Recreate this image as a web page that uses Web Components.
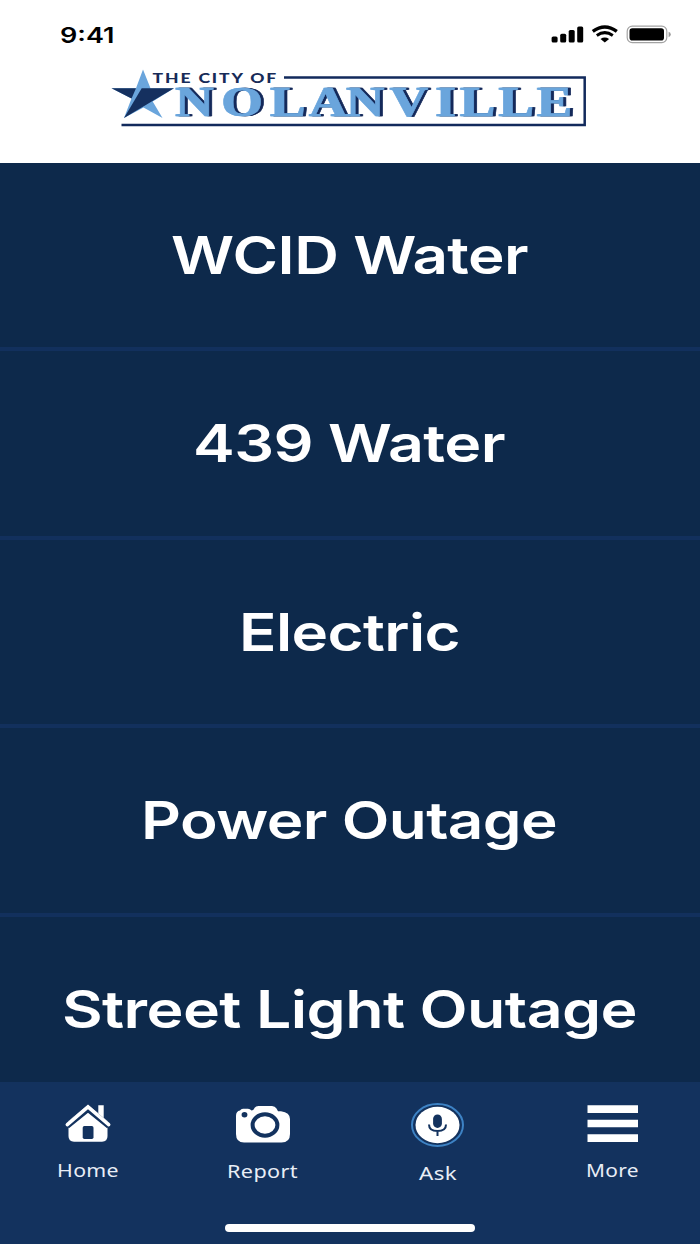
<!DOCTYPE html>
<html lang="en">
<head>
<meta charset="utf-8">
<title>City of Nolanville</title>
<style>
body{margin:0;background:#0d294b;font-family:Inter,"Liberation Sans",sans-serif}
</style>
</head>
<body>
<city-app></city-app>
<script>
class Base extends HTMLElement{
  constructor(){super();this.attachShadow({mode:'open'})}
  draw(html){this.shadowRoot.innerHTML=html}
}

/* One line of text, widened to the given width. */
customElements.define('wide-text',class extends Base{
  connectedCallback(){
    const a=n=>this.getAttribute(n),w=+a('w'),h=+a('h');
    this.draw(`<style>:host{display:block;line-height:0}svg{display:block;overflow:visible}</style>
    <svg width="${w}" height="${h}"><text x="0" y="${a('base')}" textLength="${w}" lengthAdjust="spacingAndGlyphs" fill="currentColor" font-size="${a('size')}" font-weight="${a('weight')||400}" letter-spacing="${a('gap')||0}">${a('text')}</text></svg>`);
  }
});

customElements.define('status-bar',class extends Base{
  connectedCallback(){this.draw(`<style>
    :host{display:flex;justify-content:space-between;align-items:flex-start;height:62px;box-sizing:border-box;padding:24px 29px 0 59.5px;color:#000}
    svg{display:block}</style>
    <wide-text text="9:41" w="54.5" h="20" base="18.7" size="21.5" weight="600"></wide-text>
    <svg width="120" height="22" viewBox="551 24 120 22">
      <rect x="551.6" y="36.5" width="6" height="6" rx="1.6"/><rect x="560.2" y="33.7" width="6" height="8.8" rx="1.6"/><rect x="568.7" y="30" width="6" height="12.5" rx="1.6"/><rect x="577.2" y="26.5" width="6" height="16" rx="1.6"/>
      <path d="M592.8 31.4Q604.8 22.6 616.8 31.4" fill="none" stroke="#000" stroke-width="3.4"/>
      <path d="M596.8 35.4Q604.8 29.9 612.8 35.4" fill="none" stroke="#000" stroke-width="3"/>
      <path d="M600.5 38.9Q604.8 36.3 609.1 38.9L604.8 42.4Z"/>
      <rect x="627.2" y="26.2" width="39.6" height="16.4" rx="5" fill="none" stroke="#a3a3a3" stroke-width="1.2"/>
      <rect x="629.5" y="28.3" width="34.5" height="12.2" rx="2.8"/>
      <path d="M668.6 31.8q2.2.8 2.2 2.7t-2.2 2.7z" fill="#999"/>
    </svg>`)}
});

customElements.define('city-logo',class extends Base{
  connectedCallback(){this.draw(`<style>:host{display:block;width:480px;height:62px}svg{display:block}</style>
    <svg width="480" height="62" viewBox="108 67 480 62">
      <defs><filter id="edge" x="-5%" y="-10%" width="110%" height="120%" color-interpolation-filters="sRGB">
        <feOffset in="SourceGraphic" dx="1" result="a"/>
        <feMerge result="face"><feMergeNode in="SourceGraphic"/><feMergeNode in="a"/></feMerge>
        <feOffset in="face" dx="3" result="s"/><feFlood flood-color="#14295a"/><feComposite in2="s" operator="in" result="shade"/>
        <feMerge><feMergeNode in="shade"/><feMergeNode in="face"/></feMerge></filter></defs>
      <path d="M284 77.5H584.7V125H121.5" fill="none" stroke="#122a5c" stroke-width="2.5"/>
      <path d="M143 69.5L150.5 88.2L174 88.2L152.7 101.4L162.5 118L143.5 107.6L124 118L131.5 98.5L111.5 88.2L136 88.2Z" fill="#6aa5dc"/>
      <path d="M111.5 88.2H136L131.5 98.5Z" fill="#15305f"/>
      <path d="M141.7 88.2H174L124 118Z" fill="#15305f"/>
      <text x="152.6" y="82.6" textLength="125.5" lengthAdjust="spacingAndGlyphs" font-family="Lato,sans-serif" font-size="13" font-weight="900" letter-spacing="1.4" fill="#172b58">THE CITY OF</text>
      <g filter="url(#edge)"><text transform="translate(0 116.3) scale(1.26 1)" x="138.700 175.500 213.800 244.800 274.200 309 345 364.500 395.300 425.600" y="0" font-family="'Liberation Serif',serif" font-size="42" font-weight="700" fill="#6aa5dc" stroke="#6aa5dc" stroke-width=".5">NOLANVILLE</text></g>
    </svg>`)}
});

customElements.define('app-header',class extends Base{
  connectedCallback(){this.draw(`<style>:host{display:block;height:162.5px;background:#fff}
    .logo{padding:5px 0 0 108px}</style><status-bar></status-bar><div class="logo"><city-logo></city-logo></div>`)}
});

customElements.define('menu-row',class extends Base{
  connectedCallback(){this.draw(`<style>:host{display:flex;flex:0 0 auto;justify-content:center;height:188.5px;box-sizing:border-box;padding:64px 2px 0 0;border-bottom:4.5px solid #12305d;background:#0d294b;color:#fff}</style><slot></slot>`)}
});

customElements.define('tab-item',class extends Base{
  connectedCallback(){this.draw(`<style>:host{display:flex;flex:1;flex-direction:column;align-items:center;color:#e9eef6;font-family:"Noto Sans",sans-serif}
    .icon{height:50px;padding-top:18px}</style><div class="icon"><slot name="icon"></slot></div><slot></slot>`)}
});

customElements.define('tab-icon',class extends Base{
  connectedCallback(){
    const art={
      home:`<path d="M8.500 21L28 5L47.500 21V36Q47.500 41.700 42 41.700H14Q8.500 41.700 8.500 36Z"/><path d="M38.300 5.200h5.400v17l-5.400-5z"/><path d="M7 26L28 9L49 26" fill="none" stroke="#13325e" stroke-width="6"/><path d="M7.300 24.600L28 6.900L48.700 24.600" fill="none" stroke="#fff" stroke-width="3.500" stroke-linecap="round"/><rect x="22.700" y="26" width="10.800" height="13" rx="1.700" fill="#13325e"/>`,
      camera:`<path d="M1 16Q1 11 5 10.500Q6 8.800 8 8.800H13Q15 8.800 16.500 10.500Q18.500 10.500 19.700 7.700Q20.700 6 23.500 6H37Q40 6 41.500 8.500L43 11.200H46Q55 12.500 55 19V34Q55 42.500 46.500 42.500H9Q1 42.500 1 34Z"/><ellipse cx="9.500" cy="14.700" rx="2.900" ry="2.700" fill="#13325e"/><ellipse cx="30" cy="25" rx="12.400" ry="10.700" fill="#fff" stroke="#13325e" stroke-width="4"/>`,
      mic:`<ellipse cx="27.500" cy="25" rx="25.500" ry="21" fill="none" stroke="#3d82c4" stroke-width="2"/><ellipse cx="27.500" cy="25" rx="22" ry="18.200"/><rect x="23.100" y="14.500" width="8.800" height="13.400" rx="4.400" fill="#13325e"/><path d="M19 24.500Q19 31 27.500 31T36 24.500M27.500 31V36" fill="none" stroke="#13325e" stroke-width="2"/>`,
      menu:`<path d="M2.500 5.200H53v7.700H2.500ZM2.500 19.700H53v7.600H2.500ZM2.500 34.300H53v7.600H2.500Z"/>`
    }[this.getAttribute('name')];
    this.draw(`<style>:host{display:block}svg{display:block;overflow:visible}</style><svg width="56" height="50" fill="#fff">${art}</svg>`)
  }
});

customElements.define('tab-bar',class extends Base{
  connectedCallback(){this.draw(`<style>:host{display:block;height:162px;background:#13325e;flex:none}
    nav{display:flex;height:142px}.home{width:250px;height:8px;border-radius:4px;background:#fff;margin:0 auto}</style><nav><slot></slot></nav><div class="home"></div>`)}
});

customElements.define('city-app',class extends Base{
  connectedCallback(){this.draw(`<style>:host{display:flex;flex-direction:column;width:700px;height:1244px;overflow:hidden}
    main{flex:1;min-height:0;overflow:hidden;display:flex;flex-direction:column}</style>
    <app-header></app-header>
    <main>
      <menu-row><wide-text text="WCID Water" w="357" h="60" base="47.3" size="52" weight="600" gap="-.5"></wide-text></menu-row>
      <menu-row><wide-text text="439 Water" w="312" h="60" base="47.3" size="52" weight="600" gap="-.5"></wide-text></menu-row>
      <menu-row><wide-text text="Electric" w="221" h="60" base="47.3" size="52" weight="600" gap="-.5"></wide-text></menu-row>
      <menu-row><wide-text text="Power Outage" w="416" h="60" base="47.3" size="52" weight="600" gap="-.5"></wide-text></menu-row>
      <menu-row><wide-text text="Street Light Outage" w="575" h="60" base="47.3" size="52" weight="600" gap="-.5"></wide-text></menu-row>
    </main>
    <tab-bar>
      <tab-item><tab-icon slot="icon" name="home"></tab-icon><wide-text text="Home" w="62" h="30" base="26.5" size="18" gap=".3"></wide-text></tab-item>
      <tab-item><tab-icon slot="icon" name="camera"></tab-icon><wide-text text="Report" w="71" h="30" base="28" size="18" gap=".3"></wide-text></tab-item>
      <tab-item><tab-icon slot="icon" name="mic"></tab-icon><wide-text text="Ask" w="38" h="30" base="29.500" size="18" gap=".3"></wide-text></tab-item>
      <tab-item><tab-icon slot="icon" name="menu"></tab-icon><wide-text text="More" w="53" h="30" base="26.500" size="18" gap=".3"></wide-text></tab-item>
    </tab-bar>`)}
});
</script>
</body>
</html>
